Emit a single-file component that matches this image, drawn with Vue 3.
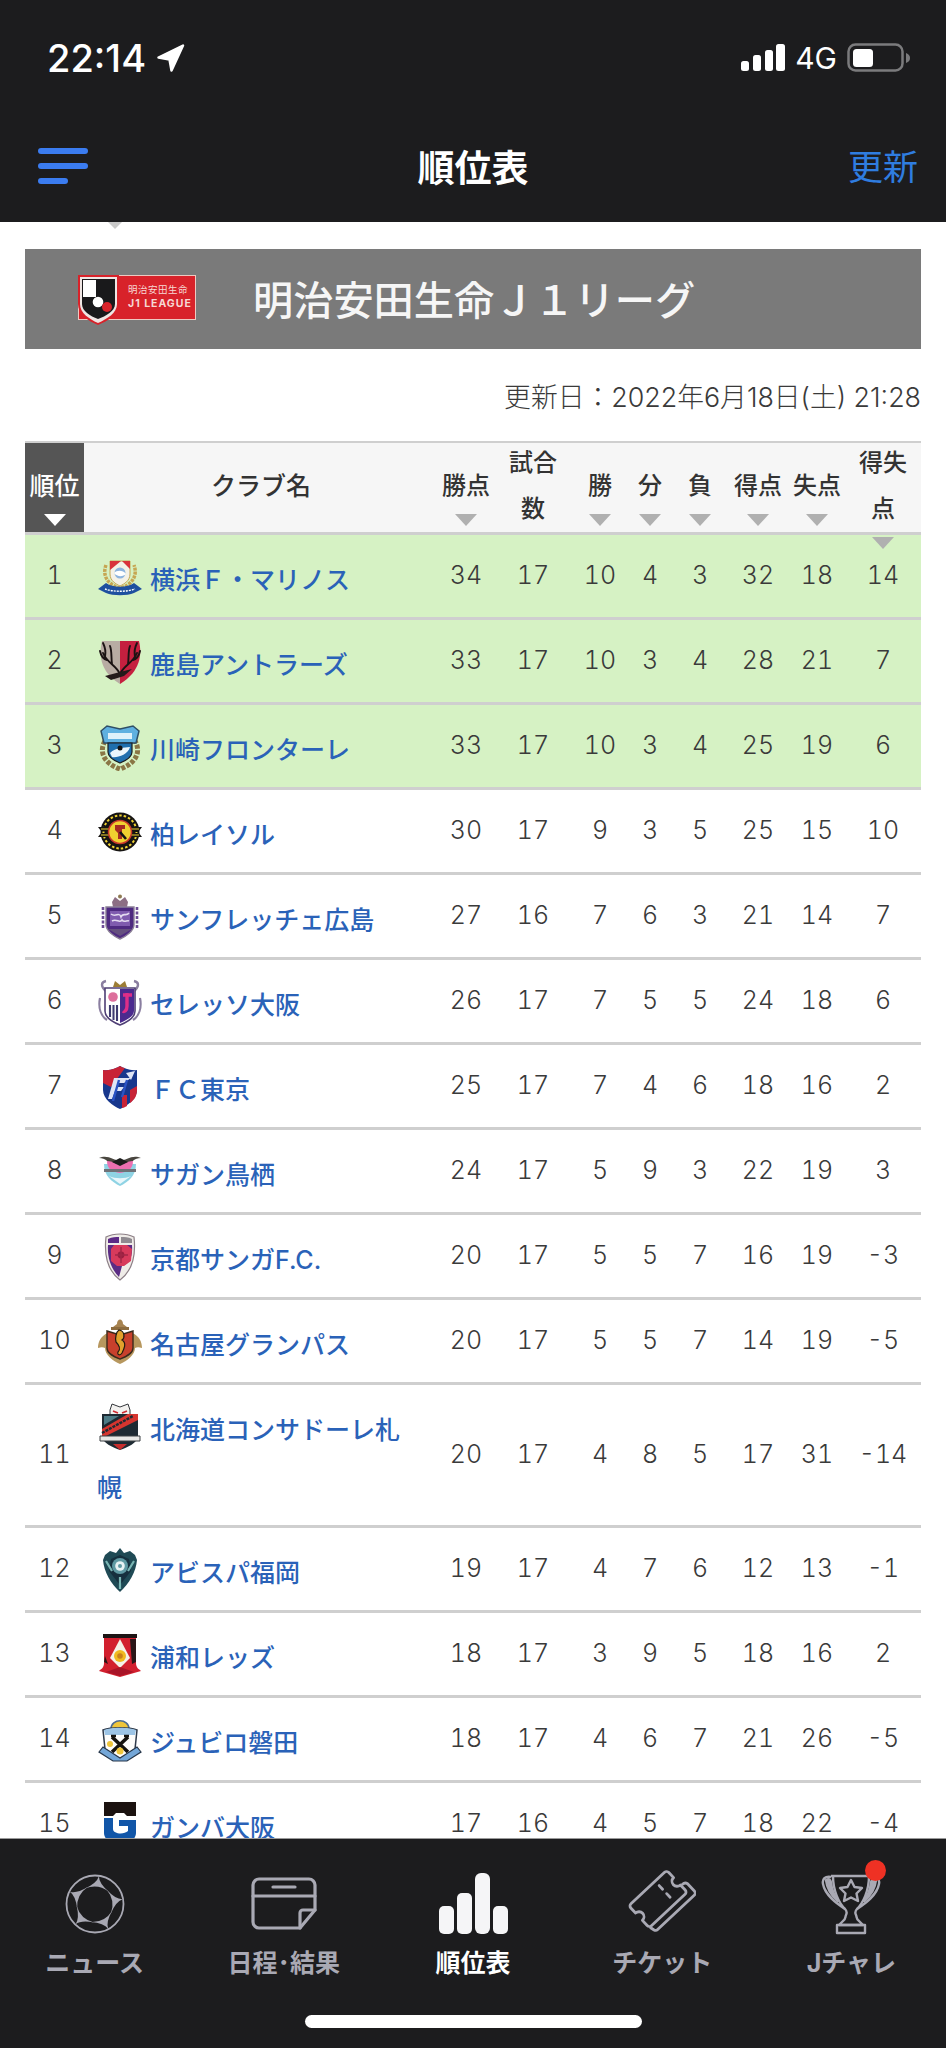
<script setup>
const crests = {
  marinos: `<path d="M9 12C5 23 11 32 23 35C35 32 41 23 37 12" fill="none" stroke="#c6a652" stroke-width="3.5" stroke-dasharray="3 1"/>
    <path d="M13 8H33V21C33 28 27 31 23 33C19 31 13 28 13 21Z" fill="#f4f1e6" stroke="#c6a652"/>
    <path d="M13 8H24L13 17Z" fill="#d8323a"/><path d="M33 8H25L33 16Z" fill="#d8323a"/>
    <circle cx="23" cy="20" r="5.500" fill="#8db4de"/><path d="M17 20C20 17 26 17 29 21C26 24 20 24 17 20Z" fill="#fff"/>
    <path d="M1 36L9 30C16 35 30 35 37 30L45 36L37 40C30 43 16 43 9 40Z" fill="#1e4f9f"/>
    <path d="M8 36C16 39 30 39 38 36" fill="none" stroke="#fff" stroke-width="1.4" stroke-dasharray="2 1"/>`,
  kashima: `<path d="M23 3H5C2 16 2 33 23 46Z" fill="#b8aca3"/><path d="M23 3H42C45 16 44 33 23 46Z" fill="#c5203f"/>
    <path d="M23 36C19 27 10 25 6 15M10 22C6 21 4 18 3 13M8 19C9 14 8 9 6 5M15 26C14 19 15 13 13 8" fill="none" stroke="#1b1313" stroke-width="1.900" stroke-linecap="round"/>
    <path d="M23 36C27 27 36 25 40 15M36 22C40 21 42 18 43 13M38 19C37 14 38 9 40 5M31 26C32 19 31 13 33 8" fill="none" stroke="#1b1313" stroke-width="1.900" stroke-linecap="round"/>
    <path d="M8 38L23 34L35 31L27 38L14 42Z" fill="#241a1a"/>`,
  kawasaki: `<path d="M8 18C2 28 6 40 23 46C40 40 44 28 38 18" fill="none" stroke="#8a7645" stroke-width="5" stroke-dasharray="4 1.5"/>
    <path d="M4 8L10 3L23 6L36 3L42 8L39 20H7Z" fill="#5fb0e0" stroke="#2f4f66" stroke-width="1.5"/>
    <path d="M11 10H35V16H11Z" fill="#dff1fa"/>
    <path d="M11 20H35V29C35 35 28 38 23 40C18 38 11 35 11 29Z" fill="#1f6fae" stroke="#1c1c1c" stroke-width="1.2"/>
    <path d="M13 30C19 24 27 25 33 24C31 32 20 35 15 34Z" fill="#eaf6fc"/><circle cx="23" cy="25" r="2.5" fill="#111"/>`,
  kashiwa: `<circle cx="23" cy="24" r="19.5" fill="#161412"/><circle cx="23" cy="24" r="16.5" fill="none" stroke="#efd232" stroke-width="2" stroke-dasharray="2.5 2"/>
    <path d="M1 19H45L42 23H4L1 19ZM4 25H42L45 29H1Z" fill="#161412"/><path d="M4 21H42M4 27H42" stroke="#efd232" stroke-width="1.2"/>
    <circle cx="23" cy="24" r="11.5" fill="#f0d030" stroke="#c9362c" stroke-width="1.5"/>
    <path d="M18 17H28V21H25V31H21V25L18 22Z" fill="#a62b22"/><path d="M23 24L29 31" stroke="#141414" stroke-width="2.6"/>`,
  sanfrecce: `<path d="M15 9L18 4L23 8L28 4L31 9L30 14H16Z" fill="#8c6e84"/><circle cx="23" cy="3.5" r="2" fill="#8f7a52"/>
    <path d="M9 14H37V32C37 38 28 44 23 46C18 44 9 38 9 32Z" fill="#4e2a80" stroke="#8b7f96" stroke-width="1.4"/>
    <path d="M13 18H33V33H13Z" fill="#7f5bae"/><path d="M14 21C19 25 22 18 24 24C26 19 29 24 32 20M15 28C20 25 22 31 25 27C27 30 30 27 32 28" fill="none" stroke="#e4dbf0" stroke-width="1.6"/>
    <path d="M6 14V36M40 14V36" stroke="#6d4d96" stroke-width="2.6" stroke-dasharray="3 1.5"/>
    <path d="M11 36H35L23 43Z" fill="#65507e"/>`,
  cerezo: `<path d="M10 14C3 8 4 4 9 3M36 14C43 8 42 4 37 3" fill="none" stroke="#8a7ea0" stroke-width="2.4"/><path d="M16 9L18 3L23 7L28 3L30 9Z" fill="#9c7d35"/>
    <path d="M8 10H38V33C38 40 28 45 23 47C18 45 8 40 8 33Z" fill="#fff" stroke="#4f3f75" stroke-width="1.6"/>
    <path d="M23 11H37V33C37 38 30 42 23 45Z" fill="#4b2a8e"/>
    <path d="M26 17H35M30 15V28C30 33 27 34 26 33" fill="none" stroke="#df2e88" stroke-width="3.4"/>
    <circle cx="16" cy="19" r="4.8" fill="#dd6f9c"/><path d="M11 27H22V43C18 42 14 40 11 36Z" fill="#f3f3f6"/>
    <path d="M13 27V39M16.500 27V42M20 27V43" stroke="#3f3a70" stroke-width="2"/>
    <path d="M3 20C1 30 4 38 10 42M43 20C45 30 42 38 36 42" fill="none" stroke="#8a7ea0" stroke-width="2.2"/>`,
  tokyo: `<path d="M6 7C14 8 19 5 23 3C27 5 33 8 40 7V27C40 36 30 43 23 46C16 43 6 36 6 27Z" fill="#17378d"/>
    <path d="M6 7C14 8 19 5 23 3C25 4 26 5 28 5L14 24L6 20Z" fill="#c82336"/>
    <path d="M33 27L40 23V27C40 34 36 38 33 40ZM25 32H30V43C28 44 26 45 25 45Z" fill="#c82336"/>
    <path d="M17 15H34L27 20H22L20 24H27L24 28H18L15 36H11ZM29 10L38 8L34 17Z" fill="#dfe5f5"/>
    <path d="M22 17L16 38M30 17L25 34" stroke="#2a53c4" stroke-width="2.4"/>`,
  sagan: `<path d="M2 10C10 6 17 12 23 13C29 12 36 6 44 10C37 10 35 14 31 17H15C11 14 9 10 2 10Z" fill="#49463f"/>
    <path d="M7 16H39C39 28 31 34 23 38C15 34 7 28 7 16Z" fill="#8fd3e4"/>
    <path d="M10 13C16 13 18 16 23 17C28 16 30 13 36 13C36 21 31 24 23 25C15 24 10 21 10 13Z" fill="#ec6fb0"/>
    <path d="M15 14L23 10L31 14L23 18Z" fill="#1c1c1c"/><path d="M7 21H39V24H7Z" fill="#6f7278"/>
    <path d="M12 28C18 31 28 31 34 28L23 36Z" fill="#eaf7fb"/>`,
  kyoto: `<path d="M9 4C17 0 29 0 37 4C39 22 35 38 23 47C11 38 7 22 9 4Z" fill="#efece8" stroke="#8c7f86" stroke-width="1.2"/>
    <path d="M11 6C15 4 19 4 22 4V10H11Z" fill="#5c2b86"/><path d="M24 4C28 4 31 4 35 6V10H24Z" fill="#8f8a90"/>
    <path d="M11 12H35C36 25 32 31 25 33L22 44C15 37 10 26 11 12Z" fill="#5b2c84"/>
    <path d="M14 16L17 12H30L35 16L34 28L27 33H20L14 28Z" fill="#d83a5c"/>
    <circle cx="24" cy="22" r="3.4" fill="#9a1f40"/><path d="M24 14V30M18 22H31" stroke="#a12747" stroke-width="1.4"/>`,
  nagoya: `<path d="M20 6C20 0 26 0 26 6L30 9H16Z" fill="#a78350"/><path d="M14 9H32V12H14Z" fill="#8d6c3e"/>
    <path d="M11 15C3 18 1 25 1 30C4 29 6 29 8 30C8 37 16 43 23 46C30 43 38 37 38 30C40 29 42 29 45 30C45 25 43 18 35 15Z" fill="#b7975e"/>
    <path d="M10 13L23 17L36 13V30C36 36 28 39 23 41C18 39 10 36 10 30Z" fill="#c8402c" stroke="#3a2a1c" stroke-width="1.4"/>
    <path d="M22 12C28 13 28 20 25 22C30 25 27 31 25 35C23 38 20 37 21 34C24 31 22 27 19 24C18 20 19 14 22 12Z" fill="#e2a12c" stroke="#211a12" stroke-width="1.2"/>`,
  consadole: `<path d="M13 7L15 1L23 4L31 1L33 7V13H13Z" fill="#f3f2f0" stroke="#33363a"/><path d="M16 8L21 10M30 8L25 10" stroke="#cf2b32" stroke-width="1.6"/>
    <path d="M5 11H41V34C41 39 30 45 23 47C16 45 5 39 5 34Z" fill="#1e2a33"/>
    <path d="M5 26L31 11H41V17L5 35Z" fill="#d6352f"/><path d="M5 30L36 13" stroke="#1e2a33" stroke-width="2.4" stroke-dasharray="3 1"/>
    <path d="M7 13H22L7 22Z" fill="#4e7b86"/><path d="M3 33H43V38H3Z" fill="#e8e8e6" stroke="#3c4045" stroke-width="1"/><path d="M16 41H30L23 47Z" fill="#c62e2e"/>`,
  avispa: `<path d="M23 2L27 7L33 5L38 9L40 14C39 26 32 38 23 46C14 38 7 26 6 14L8 9L13 5L19 7Z" fill="#1f4a55"/>
    <path d="M14 13L23 9L32 13L34 25L23 39L12 25Z" fill="#16303e"/>
    <circle cx="23" cy="20" r="8" fill="#5f9aa3"/><circle cx="23" cy="20" r="4.800" fill="#e9f3f4"/><circle cx="23" cy="20" r="2" fill="#5f9aa3"/>
    <path d="M9 15L15 25M37 15L31 25M23 31V43" stroke="#79b6b4" stroke-width="2.2"/>`,
  urawa: `<path d="M6 3H40V7H6Z" fill="#1d1414"/><path d="M7 7H39V32C39 37 42 38 44 40L23 46L2 40C4 38 7 37 7 32Z" fill="#d21f2e"/>
    <path d="M23 8L13 27L23 37L33 27Z" fill="#f5f1e8"/><circle cx="23" cy="25" r="6" fill="#f0b91f"/><circle cx="23" cy="25" r="2.800" fill="#c9801a"/>
    <path d="M33 8H39V31L35 33ZM7 31L11 33L8 25Z" fill="#2a1718"/><path d="M9 41L23 36L37 41L23 45Z" fill="#a81428"/>`,
  jubilo: `<path d="M14 13C14 2 32 2 32 13Z" fill="#eec53a" stroke="#4c6c93" stroke-width="1.6"/>
    <path d="M6 14C14 11 32 11 40 14L38 33C32 38 28 41 23 44C18 41 14 38 8 33Z" fill="#fdfdfb" stroke="#2f3a4a" stroke-width="1.5"/>
    <path d="M7 14C14 11 32 11 39 14L38 19H8Z" fill="#9dc5e6"/>
    <path d="M15 21L31 36M31 21L15 36" stroke="#15130f" stroke-width="3.6"/>
    <path d="M14 20H19M27 20H32" stroke="#15130f" stroke-width="2.600"/>
    <circle cx="23" cy="35" r="3.500" fill="#eec53a"/><circle cx="13" cy="28" r="3" fill="#eec53a"/>
    <path d="M2 36L6 31L23 42L40 31L44 36L30 45H16Z" fill="#74a7d8" stroke="#26364a" stroke-width="1.2"/>`,
  gamba: `<path d="M7 1H39V15H30L27 12H19L16 15H7Z" fill="#1b1210"/>
    <path d="M7 17H16V28C16 33 27 34 31 30V25H22V19H39V32C39 39 30 44 23 46C16 44 7 39 7 32Z" fill="#1156a8"/>`
}

const rows = [
  { rank: 1, name: '横浜Ｆ・マリノス', crest: 'marinos', stats: [34, 17, 10, 4, 3, 32, 18, 14], green: true },
  { rank: 2, name: '鹿島アントラーズ', crest: 'kashima', stats: [33, 17, 10, 3, 4, 28, 21, 7], green: true },
  { rank: 3, name: '川崎フロンターレ', crest: 'kawasaki', stats: [33, 17, 10, 3, 4, 25, 19, 6], green: true },
  { rank: 4, name: '柏レイソル', crest: 'kashiwa', stats: [30, 17, 9, 3, 5, 25, 15, 10] },
  { rank: 5, name: 'サンフレッチェ広島', crest: 'sanfrecce', stats: [27, 16, 7, 6, 3, 21, 14, 7] },
  { rank: 6, name: 'セレッソ大阪', crest: 'cerezo', stats: [26, 17, 7, 5, 5, 24, 18, 6] },
  { rank: 7, name: 'ＦＣ東京', crest: 'tokyo', stats: [25, 17, 7, 4, 6, 18, 16, 2] },
  { rank: 8, name: 'サガン鳥栖', crest: 'sagan', stats: [24, 17, 5, 9, 3, 22, 19, 3] },
  { rank: 9, name: '京都サンガF.C.', crest: 'kyoto', stats: [20, 17, 5, 5, 7, 16, 19, -3] },
  { rank: 10, name: '名古屋グランパス', crest: 'nagoya', stats: [20, 17, 5, 5, 7, 14, 19, -5] },
  { rank: 11, name: '北海道コンサドーレ札幌', crest: 'consadole', stats: [20, 17, 4, 8, 5, 17, 31, -14] },
  { rank: 12, name: 'アビスパ福岡', crest: 'avispa', stats: [19, 17, 4, 7, 6, 12, 13, -1] },
  { rank: 13, name: '浦和レッズ', crest: 'urawa', stats: [18, 17, 3, 9, 5, 18, 16, 2] },
  { rank: 14, name: 'ジュビロ磐田', crest: 'jubilo', stats: [18, 17, 4, 6, 7, 21, 26, -5] },
  { rank: 15, name: 'ガンバ大阪', crest: 'gamba', stats: [17, 16, 4, 5, 7, 18, 22, -4] }
]

const heads = [
  { label: '勝点', sort: true },
  { label: '試合数', sort: false },
  { label: '勝', sort: true },
  { label: '分', sort: true },
  { label: '負', sort: true },
  { label: '得点', sort: true },
  { label: '失点', sort: true },
  { label: '得失点', sort: true, low: true }
]
</script>

<template>
  <div class="page">
    <header class="appbar">
      <div class="status">
        <div class="clock">
          <span>22:14</span>
          <svg class="loc" width="30" height="30" viewBox="0 0 30 30">
            <path d="M27 2.500L15.500 27.500L13.500 16.500L2.500 14.500Z" fill="#fff" stroke="#fff" stroke-width="2.500" stroke-linejoin="round" />
          </svg>
        </div>
        <div class="indicators">
          <svg width="44" height="28" viewBox="0 0 44 28">
            <rect x="0" y="17" width="8" height="10" rx="2.500" fill="#fff" />
            <rect x="12" y="11" width="8" height="16" rx="2.500" fill="#fff" />
            <rect x="24" y="6" width="8" height="21" rx="2.500" fill="#fff" />
            <rect x="35" y="0" width="9" height="27" rx="2.500" fill="#fff" />
          </svg>
          <span class="net">4G</span>
          <svg width="64" height="30" viewBox="0 0 64 30">
            <rect x="1.500" y="1.500" width="54" height="26" rx="7" fill="none" stroke="#7b7b7d" stroke-width="2.500" />
            <rect x="6" y="6" width="20" height="18" rx="3.500" fill="#fff" />
            <path d="M59 10C62 11 63 13 63 15C63 17 62 19 59 20Z" fill="#7b7b7d" />
          </svg>
        </div>
      </div>
      <div class="navbar">
        <button class="menu" aria-label="menu"><i></i><i></i><i class="short"></i></button>
        <h1>順位表</h1>
        <span class="refresh">更新</span>
      </div>
    </header>

    <main class="content">
      <span class="tip"></span>
      <div class="banner">
        <svg class="jlogo" width="118" height="50" viewBox="0 0 118 50">
          <rect x="0.500" y="0.500" width="117" height="44" fill="#d8222a" stroke="#eec9c2" />
          <path d="M0 0H41V29C41 39 30 46 20 50C10 46 0 39 0 29Z" fill="#d8222a" />
          <path d="M2 2H39V29C39 38 29 44 20 48C11 44 2 38 2 29Z" fill="#efe6e4" />
          <path d="M4 4H37V29C37 36 28 41 20 44C12 41 4 36 4 29Z" fill="#19191b" />
          <path d="M5 5H18V22H5Z" fill="#fff" />
          <circle cx="20" cy="27" r="5.300" fill="#fff" />
          <circle cx="29" cy="32" r="5" fill="#d8222a" />
          <text x="50" y="18" class="jt">明治安田生命</text>
          <text x="50" y="32" class="jt en">J1 LEAGUE</text>
        </svg>
        <h2>明治安田生命Ｊ１リーグ</h2>
      </div>
      <p class="updated">更新日：2022年6月18日(土) 21:28</p>

      <div class="table">
        <div class="grid head">
          <div class="hcell rank sort">順位</div>
          <div class="hcell club">クラブ名</div>
          <div v-for="h in heads" :key="h.label" class="hcell" :class="{ sort: h.sort, low: h.low }">{{ h.label }}</div>
        </div>
        <div v-for="r in rows" :key="r.rank" class="grid row" :class="{ green: r.green }">
          <div class="num">{{ r.rank }}</div>
          <div class="name">
            <svg class="crest" width="46" height="48" viewBox="0 0 46 48" v-html="crests[r.crest]"></svg>
            <a>{{ r.name }}</a>
          </div>
          <div v-for="(s, i) in r.stats" :key="i" class="num">{{ s }}</div>
        </div>
      </div>
    </main>

    <nav class="tabs">
      <ul>
        <li>
          <svg width="60" height="60" viewBox="0 0 60 60">
            <circle cx="30" cy="30" r="28.500" fill="none" stroke="#a9a9b4" stroke-width="1.800" />
            <g fill="#a9a9b4">
              <path v-for="a in [8, 80, 152, 224, 296]" :key="a" :transform="`rotate(${a} 30 30)`" d="M30 2Q29 9 18 16Q30 9 42 16Q31 9 30 2Z" />
            </g>
          </svg>
          <span>ニュース</span>
        </li>
        <li>
          <svg width="66" height="54" viewBox="0 0 66 54" fill="none" stroke="#a9a9b4" stroke-width="3.200" stroke-linejoin="round" stroke-linecap="round">
            <path d="M8 2H58a6 6 0 0 1 6 6V33L49 51H8a6 6 0 0 1-6-6V8a6 6 0 0 1 6-6Z" />
            <path d="M2 19H64M22 10H44" />
            <path d="M64 33H52a3 3 0 0 0-3 3V51" />
          </svg>
          <span>日程･結果</span>
        </li>
        <li class="active">
          <svg width="70" height="62" viewBox="0 0 70 62" fill="#f5f5f7">
            <rect x="1" y="33" width="15" height="28" rx="5" />
            <rect x="19" y="20" width="15" height="41" rx="5" />
            <rect x="37" y="0" width="15" height="61" rx="6" />
            <rect x="55" y="33" width="15" height="28" rx="5" />
          </svg>
          <span>順位表</span>
        </li>
        <li>
          <svg width="68" height="68" viewBox="0 0 68 68" fill="none" stroke="#a9a9b4" stroke-width="2.800" stroke-linejoin="round" stroke-linecap="round">
            <g transform="translate(30 29) rotate(-43)">
              <path d="M-23 -15H23a3 3 0 0 1 3 3V-5a5 5 0 0 0 0 10V12a3 3 0 0 1-3 3H-23a3 3 0 0 1-3-3V5a5 5 0 0 0 0-10V-12a3 3 0 0 1 3-3Z" />
              <path d="M10 -9V9" stroke-dasharray="5 6" />
              <path d="M28 6a4 4 0 0 1 4 3V19a3 3 0 0 1-3 3H-21a3 3 0 0 1-3-2L-25 16" />
            </g>
          </svg>
          <span>チケット</span>
        </li>
        <li>
          <span class="dot"></span>
          <svg width="60" height="62" viewBox="0 0 60 62" fill="none" stroke="#a9a9b4" stroke-width="2.400" stroke-linejoin="round">
            <path d="M10 3H50M10 4C4 3 1 6 2 11C4 22 15 30 24 36C26 38 26 40 25 42C24 44 25 46 22 48L18 52H42L38 48C35 46 36 44 35 42C34 40 34 38 36 36C45 30 56 22 58 11C59 6 56 3 50 4" />
            <path d="M12 3C12 18 18 30 24 36M48 3C48 18 42 30 36 36" />
            <path d="M5 7C9 5 10 8 10 10C11 18 14 24 17 28C11 23 6 16 5 7ZM55 7C51 5 50 8 50 10C49 18 46 24 43 28C49 23 54 16 55 7Z" fill="#a9a9b4" />
            <path d="M30 7L33.500 14L41 15L35.500 20.500L37 28L30 24.500L23 28L24.500 20.500L19 15L26.500 14Z" />
            <rect x="16" y="52" width="28" height="8" />
          </svg>
          <span>Jチャレ</span>
        </li>
      </ul>
      <div class="home"></div>
    </nav>
  </div>
</template>

<style scoped>
.page {
  width: 946px;
  height: 2048px;
  display: flex;
  flex-direction: column;
  overflow: hidden;
  background: #fff;
  font-family: Inter, "Noto Sans CJK JP", sans-serif;
  color: #3a3a3a;
}

.appbar {
  height: 222px;
  flex: none;
  background: #1c1c1e;
  color: #fff;
  box-sizing: border-box;
  padding-top: 38px;
}

.status {
  height: 40px;
  display: flex;
  justify-content: space-between;
  align-items: center;
  padding: 0 35px 0 47px;
}

.clock {
  display: flex;
  align-items: center;
  gap: 10px;
  font-size: 38px;
  font-weight: 500;
  line-height: 40px;
}

.indicators {
  display: flex;
  align-items: center;
  gap: 10px;
}

.net {
  font-size: 30px;
  font-weight: 400;
}

.navbar {
  position: relative;
  display: flex;
  justify-content: space-between;
  align-items: center;
  height: 64px;
  margin-top: 58px;
  padding: 0 28px 0 38px;
}

.menu {
  display: flex;
  flex-direction: column;
  gap: 9px;
  width: 50px;
  margin: -4px 0 0;
  padding: 0;
  border: 0;
  background: none;
}

.menu i {
  display: block;
  height: 6px;
  width: 50px;
  border-radius: 3px;
  background: #3b7cf0;
}

.menu i.short {
  width: 30px;
}

.navbar h1 {
  position: absolute;
  left: 0;
  right: 0;
  margin: 0;
  padding-top: 1px;
  text-align: center;
  font-size: 37px;
  font-weight: 700;
  line-height: 64px;
}

.refresh {
  font-size: 35px;
  font-weight: 400;
  color: #2f7de0;
  margin-top: -7px;
}

.content {
  position: relative;
  flex: 1;
  min-height: 0;
  overflow: hidden;
  padding: 27px 25px 0;
}

.tip {
  position: absolute;
  left: 108px;
  top: 0;
  border-left: 7px solid transparent;
  border-right: 7px solid transparent;
  border-top: 7px solid #c9c9c9;
}

.banner {
  height: 100px;
  display: flex;
  align-items: center;
  background: #7a7a7a;
  padding-left: 53px;
}

.jlogo {
  flex: none;
  margin-top: 1px;
}

.jt {
  font-size: 9.500px;
  fill: #f6d8d4;
  font-weight: 400;
  letter-spacing: 0.500px;
}

.jt.en {
  font-weight: 700;
  font-size: 10.500px;
  letter-spacing: 1px;
}

.banner h2 {
  margin: -4px 0 0 57px;
  font-size: 40.200px;
  font-weight: 500;
  color: #f6f6f6;
  white-space: nowrap;
}

.updated {
  margin: 30px 0 26px;
  line-height: 36px;
  text-align: right;
  font-size: 26.800px;
  font-weight: 300;
  color: #3a3a3a;
}

.grid {
  display: grid;
  grid-template-columns: 59px 348px 68px 66px 68px 32px 68px 48px 70px 62px 7px;
}

.head {
  position: relative;
  z-index: 2;
  height: 94px;
  box-sizing: border-box;
  background: #f6f6f6;
  border-top: 2px solid #cfcfcf;
  border-bottom: 3px solid #cfcfcf;
}

.hcell {
  position: relative;
  display: flex;
  align-items: center;
  justify-content: center;
  text-align: center;
  box-sizing: border-box;
  padding-bottom: 4px;
  font-size: 24px;
  font-weight: 500;
  line-height: 46px;
  color: #333;
  height: 89px;
}

.hcell.sort::after {
  content: "";
  position: absolute;
  left: 50%;
  top: 71px;
  margin-left: -11px;
  border-left: 11px solid transparent;
  border-right: 11px solid transparent;
  border-top: 12px solid #b0b0b0;
}

.hcell.low::after {
  top: 94px;
}

.hcell.rank {
  background: #555;
  color: #fff;
  font-size: 25px;
}

.hcell.rank::after {
  border-top-color: #fff;
}

.hcell.club {
  padding-left: 6px;
  font-size: 25px;
}

.row {
  box-sizing: border-box;
  border-bottom: 3px solid #cfcfcf;
  align-items: center;
}

.row.green {
  background: #d6f2c4;
}

.num {
  text-align: center;
  font-size: 25px;
  font-weight: 300;
  padding-bottom: 3px;
  font-variant-numeric: tabular-nums;
  color: #3a3a3a;
}

.name {
  padding: 16px 10px 8px 13px;
  font-size: 25px;
  font-weight: 500;
  line-height: 58px;
  color: #2a62b8;
}

.crest {
  display: inline-block;
  vertical-align: -12px;
  margin-right: 7px;
}

.tabs {
  position: relative;
  z-index: 3;
  flex: none;
  height: 210px;
  box-sizing: border-box;
  background: #1c1c1e;
  border-top: 1px solid #9a9a9a;
  padding-top: 31px;
}

.tabs ul {
  display: grid;
  grid-template-columns: repeat(5, 1fr);
  margin: 0;
  padding: 0;
  list-style: none;
}

.tabs li {
  position: relative;
  display: flex;
  flex-direction: column;
  align-items: center;
  font-size: 25px;
  font-weight: 700;
  line-height: 36px;
  color: #a9a9b4;
}

.tabs li svg {
  height: 68px;
  margin-bottom: 7px;
  display: block;
}

.tabs li.active {
  color: #fff;
}

.dot {
  position: absolute;
  left: 108px;
  top: -10px;
  z-index: 1;
  width: 21px;
  height: 21px;
  border-radius: 50%;
  background: #ee3124;
}

.home {
  width: 337px;
  height: 13px;
  margin: 34px auto 0;
  border-radius: 7px;
  background: #fff;
}
</style>
